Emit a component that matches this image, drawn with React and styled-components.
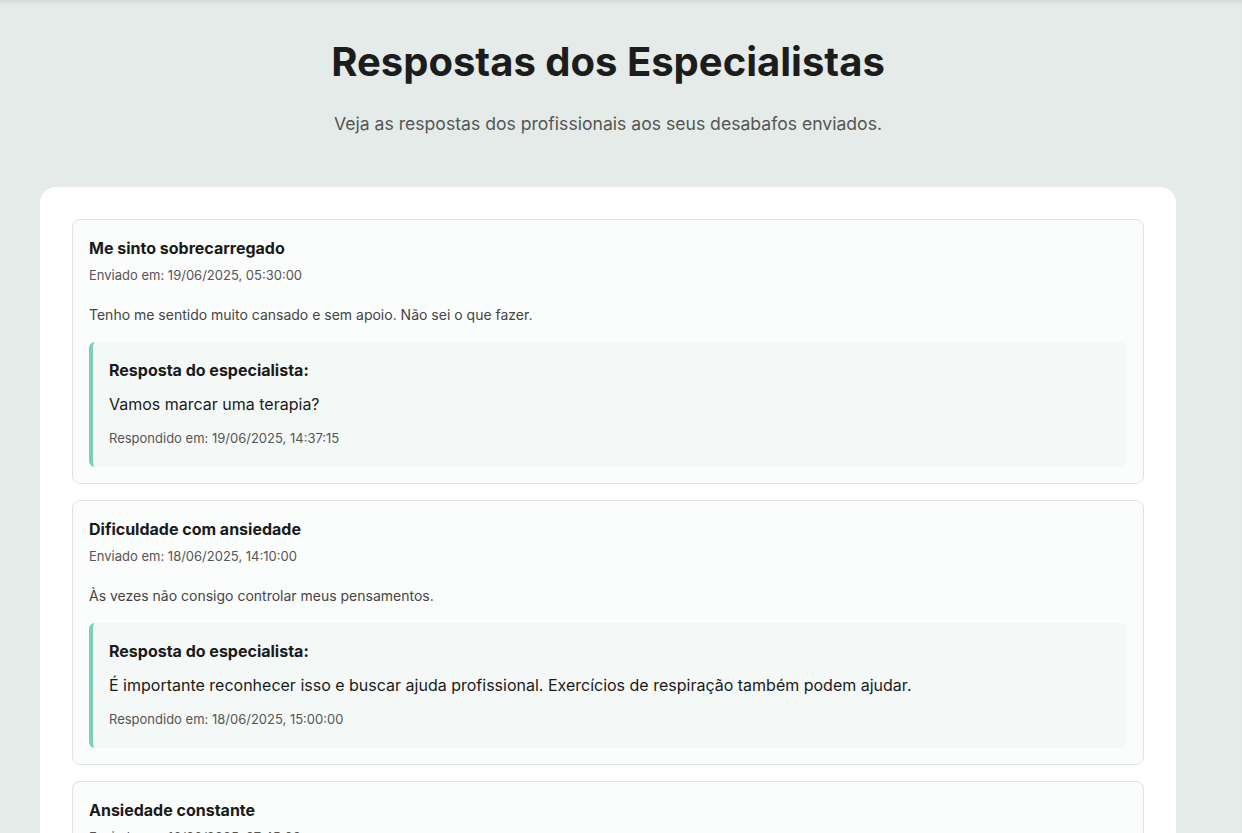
import styled, { createGlobalStyle } from 'styled-components'

const GlobalStyle = createGlobalStyle`
  html, body {
    margin: 0;
    padding: 0;
    background: #e4ebe8;
    font-family: Inter, "Noto Sans", "Liberation Sans", sans-serif;
    color: #1a1a1a;
  }
`

const respostas = [
  {
    titulo: 'Me sinto sobrecarregado',
    enviado: '19/06/2025, 05:30:00',
    mensagem: 'Tenho me sentido muito cansado e sem apoio. Não sei o que fazer.',
    resposta: 'Vamos marcar uma terapia?',
    respondido: '19/06/2025, 14:37:15'
  },
  {
    titulo: 'Dificuldade com ansiedade',
    enviado: '18/06/2025, 14:10:00',
    mensagem: 'Às vezes não consigo controlar meus pensamentos.',
    resposta:
      'É importante reconhecer isso e buscar ajuda profissional. Exercícios de respiração também podem ajudar.',
    respondido: '18/06/2025, 15:00:00'
  },
  {
    titulo: 'Ansiedade constante',
    enviado: '16/06/2025, 07:45:00',
    mensagem: 'Sinto uma preocupação que não passa, mesmo quando está tudo bem.',
    resposta: 'Procure identificar os gatilhos e converse com um profissional.',
    respondido: '16/06/2025, 10:20:00'
  }
]

const Page = styled.div`
  min-height: 100vh;
  padding: 38px 66px 40px 40px;
  box-sizing: border-box;
  box-shadow: inset 0 5px 5px -3px rgba(0, 0, 0, 0.09);
`

const Header = styled.header`
  text-align: center;
  margin-bottom: 50px;

  h1 {
    margin: 0;
    font-size: 40px;
    line-height: 48px;
    font-weight: 700;
    color: #1c1c1c;
  }

  p {
    margin: 25px 0 0;
    font-size: 17.6px;
    line-height: 26px;
    color: #555;
  }
`

const Panel = styled.main`
  background: #fff;
  border-radius: 16px;
  padding: 32px;
  display: flex;
  flex-direction: column;
  gap: 16px;
`

const Card = styled.article`
  background: #fbfcfc;
  border: 1px solid #e0e3e2;
  border-radius: 8px;
  padding: 16px;

  h3 {
    margin: 0;
    font-size: 16px;
    line-height: 24px;
    font-weight: 650;
    color: #1a1a1a;
  }
`

const Sent = styled.div`
  margin-top: 5px;
  font-size: 13px;
  line-height: 20px;
  color: #555;
`

const Message = styled.p`
  margin: 19px 0 16px;
  font-size: 14px;
  line-height: 22px;
  color: #444;
`

const Reply = styled.section`
  background: #f4f9f8;
  border-left: 4px solid #7dcfb6;
  border-radius: 6px;
  padding: 16px 16px 19px 16px;

  h4 {
    margin: 0;
    font-size: 16px;
    line-height: 24px;
    font-weight: 650;
    color: #1a1a1a;
  }
`

const ReplyText = styled.p`
  margin: 10px 0 12px;
  font-size: 16px;
  line-height: 24px;
  color: #1a1a1a;
`

const Answered = styled.div`
  font-size: 13px;
  line-height: 20px;
  color: #555;
`

export default function App() {
  return (
    <>
      <GlobalStyle />
      <Page>
        <Header>
          <h1>Respostas dos Especialistas</h1>
          <p>Veja as respostas dos profissionais aos seus desabafos enviados.</p>
        </Header>
        <Panel>
          {respostas.map((r) => (
            <Card key={r.titulo}>
              <h3>{r.titulo}</h3>
              <Sent>Enviado em: {r.enviado}</Sent>
              <Message>{r.mensagem}</Message>
              <Reply>
                <h4>Resposta do especialista:</h4>
                <ReplyText>{r.resposta}</ReplyText>
                <Answered>Respondido em: {r.respondido}</Answered>
              </Reply>
            </Card>
          ))}
        </Panel>
      </Page>
    </>
  )
}
